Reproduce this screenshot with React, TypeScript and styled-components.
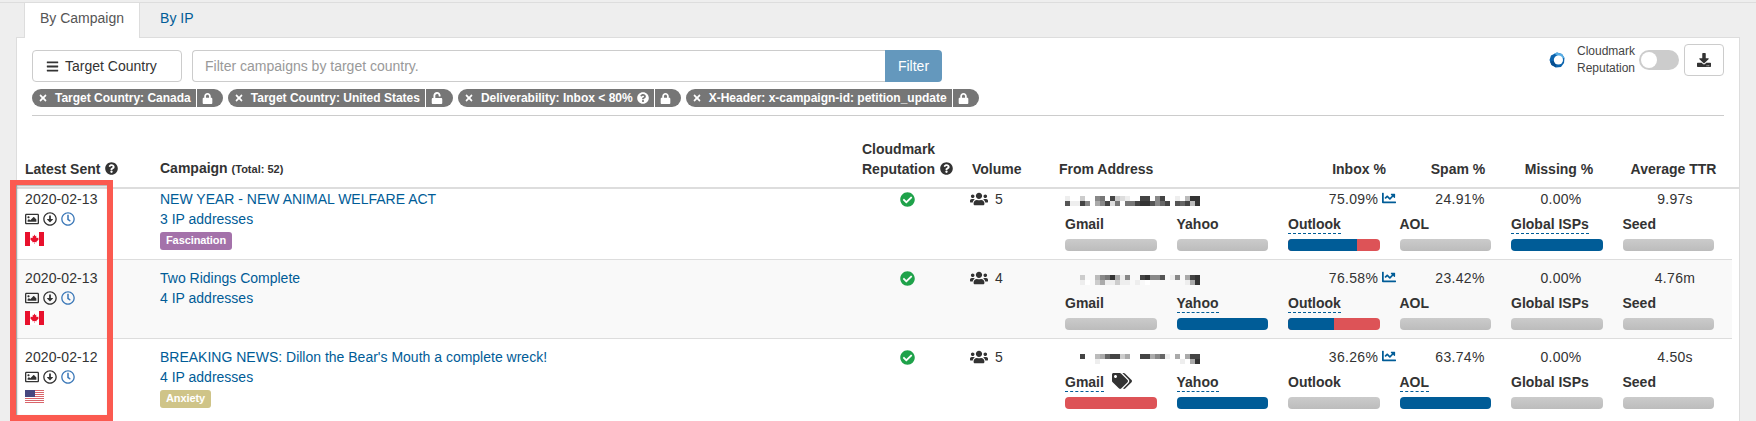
import React from "react";
import styled, { createGlobalStyle } from "styled-components";
import {
  FaBars, FaTimes, FaLock, FaUnlock, FaQuestionCircle, FaDownload, FaCheckCircle,
  FaUsers, FaChartLine, FaTags, FaRegImage, FaRegArrowAltCircleDown, FaRegClock,
} from "react-icons/fa";

const Global = createGlobalStyle`
  html, body { margin: 0; padding: 0; height: 421px; overflow: hidden; background: #eee; }
  body { font-family: "Liberation Sans", Arial, sans-serif; font-size: 14px; line-height: 20px; color: #333; }
  * { box-sizing: border-box; }
`;

const BLUE = "#005c97";

const Page = styled.div`
  position: relative;
  height: 421px;
  overflow: hidden;
  padding-top: 2px;
`;
const TabBar = styled.div`
  display: flex;
  height: 35px;
  padding-left: 24px;
  border-top: 1px solid #ddd;
`;
const Tab = styled.div<{ $active?: boolean }>`
  height: 35px;
  padding: 5px 15px 0;
  margin-right: 4px;
  color: ${(p) => (p.$active ? "#555" : BLUE)};
  background: ${(p) => (p.$active ? "#fff" : "transparent")};
  border: 1px solid ${(p) => (p.$active ? "#ddd" : "transparent")};
  border-width: 0 1px;
  position: relative;
  z-index: 1;
`;
const Panel = styled.div`
  margin: 0 16px;
  height: 384px;
  background: #fff;
  border: 1px solid #ddd;
  border-bottom: 0;
`;
const Toolbar = styled.div`
  display: flex;
  justify-content: space-between;
  align-items: flex-start;
  margin: 0 15px;
  padding: 6px 0 8px;
  border-bottom: 1px solid #ccc;
  height: 78px;
`;
const FilterColumn = styled.div`
  width: 910px;
  padding-top: 6px;
`;
const FilterRow = styled.div`
  display: flex;
  height: 32px;
`;
const SelectButton = styled.div`
  flex: 0 0 150px;
  display: flex;
  align-items: center;
  gap: 6px;
  padding-left: 13px;
  margin-right: 10px;
  border: 1px solid #ccc;
  border-radius: 4px;
`;
const FilterInput = styled.input`
  flex: 1;
  min-width: 0;
  height: 32px;
  padding: 0 12px;
  font: 14px "Liberation Sans", Arial, sans-serif;
  color: #333;
  border: 1px solid #ccc;
  border-right: 0;
  border-radius: 4px 0 0 4px;
  outline: 0;
  &::placeholder { color: #999; opacity: 1; }
`;
const FilterButton = styled.div`
  flex: 0 0 57px;
  display: flex;
  align-items: center;
  justify-content: center;
  background: #6498bd;
  color: #fff;
  border-radius: 0 4px 4px 0;
`;
const ChipRow = styled.div`
  display: flex;
  gap: 5px;
  margin-top: 7px;
  white-space: nowrap;
`;
const Chip = styled.div`
  display: flex;
  align-items: center;
  height: 18px;
  padding: 0 10px 0 6px;
  border-radius: 9px;
  background: #767676;
  color: #fff;
  font-size: 12px;
  font-weight: 700;
`;
const ChipLabel = styled.span`
  display: inline-flex;
  align-items: center;
  gap: 4px;
  margin: 0 5px 0 7px;
`;
const ChipDivider = styled.span`
  width: 1px;
  height: 18px;
  background: #fff;
  margin-right: 5px;
`;
const ToolsGroup = styled.div`
  display: flex;
  align-items: center;
  height: 32px;
`;
const LogoMark = styled.svg`
  width: 16px;
  height: 16px;
  margin-right: 12px;
`;
const ToolsLabel = styled.div`
  font-size: 12px;
  line-height: 17px;
  width: 62px;
  color: #444;
`;
const Toggle = styled.div`
  width: 40px;
  height: 20px;
  padding: 2px;
  margin-right: 5px;
  border-radius: 10px;
  background: #ccc;
`;
const ToggleKnob = styled.div`
  width: 16px;
  height: 16px;
  border-radius: 50%;
  background: #fff;
`;
const IconButton = styled.div`
  width: 40px;
  height: 32px;
  display: flex;
  align-items: center;
  justify-content: center;
  border: 1px solid #ccc;
  border-radius: 4px;
  background: #fff;
`;
const COLS = "135px 702px 110px 87px 1fr";
const HeaderRow = styled.div`
  display: grid;
  grid-template-columns: ${COLS};
  align-items: end;
  height: 73px;
  padding-bottom: 8px;
  border-bottom: 2px solid #ddd;
  font-weight: 700;
`;
const HeaderCell = styled.div`
  padding-left: 8px;
  display: block;
  white-space: nowrap;
`;
const Small = styled.small`
  font-size: 11px;
`;
const HelpIcon = styled(FaQuestionCircle)`
  font-size: 13px;
  vertical-align: -1px;
  margin-left: 1px;
`;
const MetricGrid = styled.div`
  display: grid;
  grid-template-columns: 259px 100px 100px 102px 1fr;
`;
const MetricHead = styled.div<{ $center?: boolean; $pad?: number; $back?: number }>`
  text-align: ${(p) => (p.$center ? "center" : "left")};
  padding-left: ${(p) => p.$pad ?? 0}px;
  padding-right: ${(p) => p.$back ?? 0}px;
  white-space: nowrap;
`;
const Row = styled.div<{ $first?: boolean; $alt?: boolean; $last?: boolean }>`
  display: grid;
  grid-template-columns: ${COLS};
  margin-right: 7px;
  padding: ${(p) => (p.$first ? "0" : "8px")} 0 8px;
  background: ${(p) => (p.$alt ? "#f9f9f9" : "#fff")};
  border-bottom: ${(p) => (p.$last ? "0" : "1px solid #ddd")};
`;
const DateCell = styled.div`
  padding-left: 8px;
  letter-spacing: 0.1px;
`;
const ActionIcons = styled.div`
  display: flex;
  align-items: center;
  gap: 4px;
  height: 20px;
  font-size: 14px;
`;
const ClockWrap = styled.span`
  display: inline-flex;
  color: #3b78b8;
`;
const FlagBox = styled.svg`
  display: block;
  width: 19px;
  height: 14px;
  margin-top: 3px;
`;
const CampaignCell = styled.div`
  padding-left: 8px;
`;
const LinkLine = styled.a`
  display: block;
  color: ${BLUE};
`;
const Badge = styled.span<{ $bg: string }>`
  display: inline-block;
  height: 18px;
  margin-top: 3px;
  padding: 0 6px;
  border-radius: 3px;
  background: ${(p) => p.$bg};
  color: #fff;
  font-size: 11px;
  font-weight: 700;
  line-height: 17px;
  letter-spacing: -0.1px;
`;
const ReputationCell = styled.div`
  padding: 3px 0 0 46px;
  color: #1fa24a;
  font-size: 15px;
  line-height: 15px;
`;
const VolumeCell = styled.div`
  display: flex;
  align-items: flex-start;
  gap: 7px;
  padding-left: 6px;
  height: 20px;
  line-height: 20px;
`;
const UsersIcon = styled(FaUsers)`
  font-size: 18px;
  margin-top: 1px;
`;
const Mosaic = styled.svg`
  display: block;
  width: 135px;
  height: 10px;
  margin: 7px 0 0 14px;
`;
const Value = styled.div<{ $pad?: number }>`
  text-align: center;
  padding-left: ${(p) => p.$pad ?? 0}px;
  white-space: nowrap;
  letter-spacing: 0.3px;
`;
const TrendIcon = styled(FaChartLine)`
  color: ${BLUE};
  font-size: 14px;
  margin-left: 4px;
  vertical-align: -1px;
`;
const IspGrid = styled.div`
  display: grid;
  grid-template-columns: repeat(6, 1fr);
  gap: 20px;
  margin: 6px 18px 0 14px;
`;
const IspHead = styled.div`
  display: flex;
  align-items: flex-start;
  height: 19px;
`;
const IspName = styled.span<{ $dashed?: boolean }>`
  font-weight: 700;
  line-height: 18px;
  height: 19px;
  white-space: nowrap;
  border-bottom: 1px dashed ${(p) => (p.$dashed ? BLUE : "transparent")};
`;
const TagIcon = styled(FaTags)`
  font-size: 20px;
  margin: -2px 0 0 8px;
`;
const Bar = styled.div<{ $active?: boolean }>`
  display: flex;
  height: 12px;
  margin-top: 5px;
  border-radius: 4px;
  overflow: hidden;
  background: ${(p) => (p.$active ? "#dd5357" : "linear-gradient(#cbcbcb, #bcbcbc)")};
`;
const BarFill = styled.div`
  background: ${BLUE};
`;
const Annotation = styled.div`
  position: absolute;
  left: 10px;
  top: 180px;
  width: 103px;
  height: 241px;
  border: 6px solid #fb5a50;
  border-top-width: 5px;
  box-shadow: inset 1px 1px 2px rgba(0, 0, 0, 0.35);
  pointer-events: none;
`;

const CanadaFlag = () => (
  <FlagBox viewBox="0 0 19 14">
    <rect width="19" height="14" fill="#fff" />
    <rect width="5" height="14" fill="#e8112d" />
    <rect x="14" width="5" height="14" fill="#e8112d" />
    <path d="M9.5 2.6 10.4 4.3 11.4 3.8 11 6.2 12 5.2 12.3 6 13.6 5.8 13.2 7.2 13.8 7.5 11.5 9.4 11.7 10.2 9.7 10 9.7 12 9.3 12 9.3 10 7.3 10.2 7.5 9.4 5.2 7.5 5.8 7.2 5.4 5.8 6.7 6 7 5.2 8 6.2 7.6 3.8 8.6 4.3Z" fill="#e8112d" />
  </FlagBox>
);

const USFlag = () => (
  <FlagBox viewBox="0 0 19 14">
    <rect width="19" height="14" fill="#fff" />
    {[0, 2, 4, 6, 8, 10, 12].map((i) => (
      <rect key={i} y={i} width="19" height="1" fill="#d9656b" />
    ))}
    <rect width="10" height="7" fill="#47477f" />
  </FlagBox>
);

const shade = (c: string) => `#${c}${c}${c}`;

const Pixels = ({ rows }: { rows: string[] }) => (
  <Mosaic viewBox="0 0 135 10" shapeRendering="crispEdges">
    {rows.map((line, y) =>
      line.split("").map((c, x) =>
        c === "." ? null : <rect key={`${y}-${x}`} x={x * 5} y={y * 5} width="5" height="5" fill={shade(c)} />
      )
    )}
  </Mosaic>
);

type Isp = { name: string; dashed?: boolean; blue?: number; red?: boolean; tag?: boolean };

const Rows = [
  {
    date: "2020-02-13", flag: "ca", title: "NEW YEAR - NEW ANIMAL WELFARE ACT", ips: "3 IP addresses",
    badge: { text: "Fascination", bg: "#a472aa" }, volume: 5,
    pixels: ["effc..87.4cde..44.84..e.b33", "5ee48.a84d7.774335864.564b3"],
    inbox: "75.09%", spam: "24.91%", missing: "0.00%", ttr: "9.97s",
    isps: [
      { name: "Gmail" }, { name: "Yahoo" }, { name: "Outlook", dashed: true, blue: 75 }, { name: "AOL" },
      { name: "Global ISPs", dashed: true, blue: 100 }, { name: "Seed" },
    ] as Isp[],
  },
  {
    date: "2020-02-13", flag: "ca", title: "Two Ridings Complete", ips: "4 IP addresses", volume: 4,
    pixels: ["...c..b873ae8..43885.e8.a43", "...ef.caeecee.e.f.......ea3"],
    inbox: "76.58%", spam: "23.42%", missing: "0.00%", ttr: "4.76m",
    isps: [
      { name: "Gmail" }, { name: "Yahoo", dashed: true, blue: 100 }, { name: "Outlook", dashed: true, blue: 50 },
      { name: "AOL" }, { name: "Global ISPs" }, { name: "Seed" },
    ] as Isp[],
  },
  {
    date: "2020-02-12", flag: "us", title: "BREAKING NEWS: Dillon the Bear's Mouth a complete wreck!", ips: "4 IP addresses",
    badge: { text: "Anxiety", bg: "#cfc488" }, volume: 5,
    pixels: ["...4..ba644ca..44a86e.a.a44", "......e................e.a3."],
    inbox: "36.26%", spam: "63.74%", missing: "0.00%", ttr: "4.50s",
    isps: [
      { name: "Gmail", dashed: true, red: true, tag: true }, { name: "Yahoo", dashed: true, blue: 100 },
      { name: "Outlook" }, { name: "AOL", dashed: true, blue: 100 }, { name: "Global ISPs" }, { name: "Seed" },
    ] as Isp[],
  },
];

const Chips = [
  { label: "Target Country: Canada", lock: true },
  { label: "Target Country: United States", lock: false },
  { label: "Deliverability: Inbox < 80%", lock: true, help: true },
  { label: "X-Header: x-campaign-id: petition_update", lock: true },
];

export default function App() {
  return (
    <Page>
      <Global />
      <TabBar>
        <Tab $active>By Campaign</Tab>
        <Tab>By IP</Tab>
      </TabBar>
      <Panel>
        <Toolbar>
          <FilterColumn>
            <FilterRow>
              <SelectButton>
                <FaBars size={13} />
                Target Country
              </SelectButton>
              <FilterInput placeholder="Filter campaigns by target country." />
              <FilterButton>Filter</FilterButton>
            </FilterRow>
            <ChipRow>
              {Chips.map((c) => (
                <Chip key={c.label}>
                  <FaTimes size={10} />
                  <ChipLabel>
                    {c.label}
                    {c.help && <FaQuestionCircle size={12} />}
                  </ChipLabel>
                  <ChipDivider />
                  {c.lock ? <FaLock size={11} /> : <FaUnlock size={12} />}
                </Chip>
              ))}
            </ChipRow>
          </FilterColumn>
          <ToolsGroup>
            <LogoMark viewBox="0 0 16 16">
              <path d="M8 .5 13 2 15.5 6 15 11 12 15 7 15.5 2.5 13 .5 8 2 3.5Z" fill="#0b63ad" />
              <path d="M5 1.4 8 .5 13 2 15.5 6 11.5 6.5 9 4Z" fill="#58aee6" />
              <path d="M2.5 13 1 9.5 4.5 9 7 12 7 15.5Z" fill="#084f91" />
              <circle cx="9.4" cy="8" r="4.6" fill="#fff" />
            </LogoMark>
            <ToolsLabel>
              Cloudmark
              <br />
              Reputation
            </ToolsLabel>
            <Toggle>
              <ToggleKnob />
            </Toggle>
            <IconButton>
              <FaDownload size={14} />
            </IconButton>
          </ToolsGroup>
        </Toolbar>
        <HeaderRow>
          <HeaderCell>
            Latest Sent <HelpIcon />
          </HeaderCell>
          <HeaderCell>
            Campaign <Small>(Total: 52)</Small>
          </HeaderCell>
          <HeaderCell>
            Cloudmark
            <br />
            Reputation <HelpIcon />
          </HeaderCell>
          <HeaderCell>Volume</HeaderCell>
          <MetricGrid>
            <MetricHead $pad={8}>From Address</MetricHead>
            <MetricHead $center $back={2}>Inbox %</MetricHead>
            <MetricHead $center $back={4}>Spam %</MetricHead>
            <MetricHead $center $back={4}>Missing %</MetricHead>
            <MetricHead $center $back={4}>Average TTR</MetricHead>
          </MetricGrid>
        </HeaderRow>
        {Rows.map((r, i) => (
          <Row key={i} $first={i === 0} $alt={i === 1} $last={i === 2}>
            <DateCell>
              {r.date}
              <ActionIcons>
                <FaRegImage />
                <FaRegArrowAltCircleDown />
                <ClockWrap>
                  <FaRegClock />
                </ClockWrap>
              </ActionIcons>
              {r.flag === "ca" ? <CanadaFlag /> : <USFlag />}
            </DateCell>
            <CampaignCell>
              <LinkLine>{r.title}</LinkLine>
              <LinkLine>{r.ips}</LinkLine>
              {r.badge && <Badge $bg={r.badge.bg}>{r.badge.text}</Badge>}
            </CampaignCell>
            <ReputationCell>
              <FaCheckCircle />
            </ReputationCell>
            <VolumeCell>
              <UsersIcon />
              {r.volume}
            </VolumeCell>
            <div>
              <MetricGrid>
                <Pixels rows={r.pixels} />
                <Value $pad={5}>
                  {r.inbox}
                  <TrendIcon />
                </Value>
                <Value>{r.spam}</Value>
                <Value>{r.missing}</Value>
                <Value $pad={6}>{r.ttr}</Value>
              </MetricGrid>
              <IspGrid>
                {r.isps.map((s) => (
                  <div key={s.name}>
                    <IspHead>
                      <IspName $dashed={s.dashed}>{s.name}</IspName>
                      {s.tag && <TagIcon />}
                    </IspHead>
                    <Bar $active={s.blue !== undefined || s.red}>
                      {s.blue !== undefined && <BarFill style={{ width: `${s.blue}%` }} />}
                    </Bar>
                  </div>
                ))}
              </IspGrid>
            </div>
          </Row>
        ))}
      </Panel>
      <Annotation />
    </Page>
  );
}
